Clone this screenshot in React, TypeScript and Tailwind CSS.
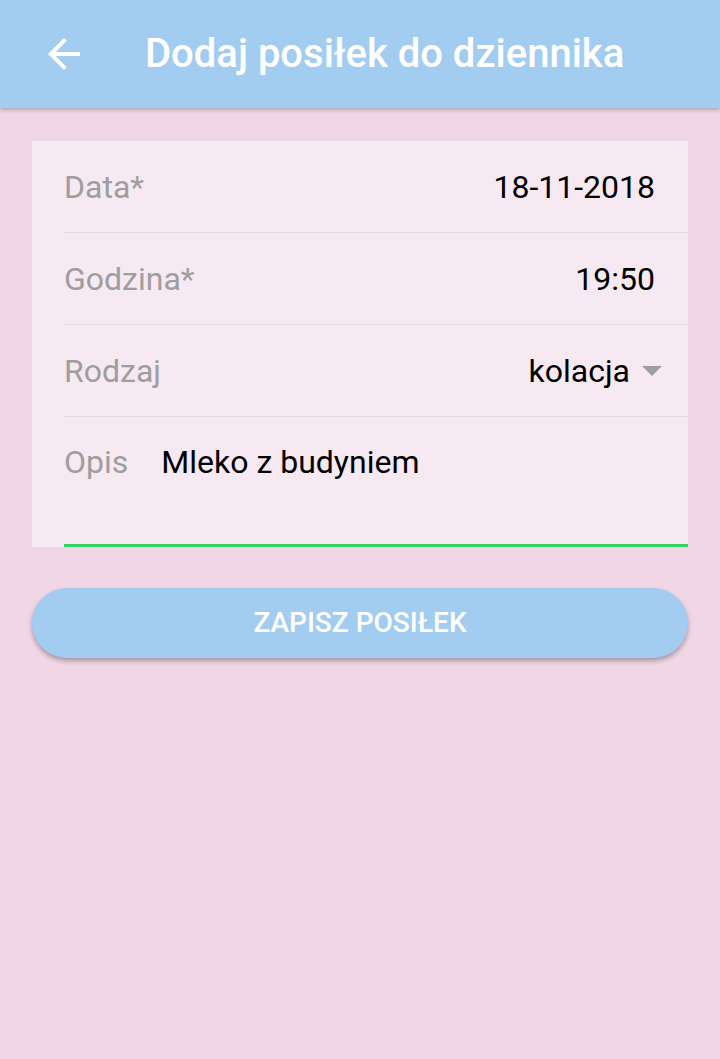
const font = { fontFamily: 'Roboto, "Noto Sans", sans-serif' };

function Row({ label, children }: { label: string; children: React.ReactNode }) {
  return (
    <div className="flex h-[92px] items-center justify-between border-b border-[#dedcde] pr-[33px]">
      <span className="text-[32px] text-[#9e9e9e]">{label}</span>
      {children}
    </div>
  );
}

export default function App() {
  return (
    <div className="flex min-h-[1059px] flex-col bg-[#f1d6e5]" style={font}>
      <header className="flex h-[108px] items-center bg-[#a3cdf0] px-[40px] shadow-[0_2px_4px_rgba(0,0,0,0.25)]">
        <svg width="48" height="48" viewBox="0 0 24 24" fill="#ffffff">
          <path d="M20 11H7.83l5.59-5.59L12 4l-8 8 8 8 1.41-1.41L7.83 13H20v-2z" />
        </svg>
        <h1 className="ml-[57px] text-[40px] font-medium text-white">Dodaj posiłek do dziennika</h1>
      </header>

      <main className="px-[32px] pt-[33px]">
        <div className="bg-[#f7e9f2] pl-[32px]">
          <Row label="Data*">
            <span className="text-[32px] text-black">18-11-2018</span>
          </Row>
          <Row label="Godzina*">
            <span className="text-[32px] text-black">19:50</span>
          </Row>
          <Row label="Rodzaj">
            <span className="mr-[-7px] flex items-center">
              <span className="text-[32px] text-black">kolacja</span>
              <svg width="20" height="10" viewBox="0 0 20 10" className="ml-[12px]" fill="#9e9e9e">
                <polygon points="0,0 20,0 10,10" />
              </svg>
            </span>
          </Row>
          <div className="flex h-[130px] items-start border-b-[3px] border-[#33d35f] pt-[21px]">
            <span className="text-[32px] text-[#9e9e9e]">Opis</span>
            <span className="ml-[33px] text-[32px] text-black">Mleko z budyniem</span>
          </div>
        </div>

        <button className="mt-[41px] flex h-[70px] w-full items-center justify-center rounded-full bg-[#a3cdf0] text-[28px] font-medium text-white shadow-[0_3px_5px_rgba(0,0,0,0.3)]">
          ZAPISZ POSIŁEK
        </button>
      </main>
    </div>
  );
}
